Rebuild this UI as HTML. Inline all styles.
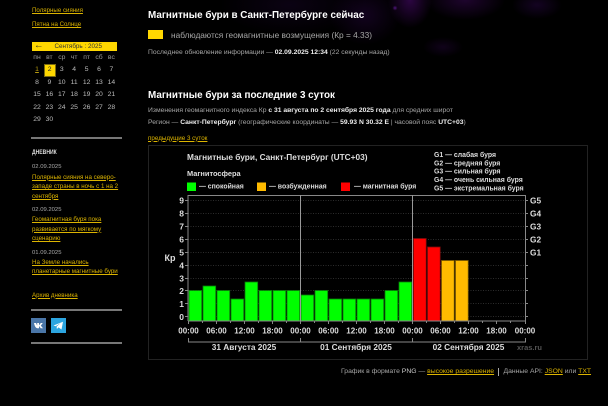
<!DOCTYPE html>
<html><head><meta charset="utf-8">
<style>
html,body{margin:0;padding:0;background:#000;width:608px;height:406px;overflow:hidden}
body{position:relative;font-family:"Liberation Sans",sans-serif;color:#a6a6a6;font-size:7px}
.a{position:absolute;white-space:nowrap}
a{color:#dcb400;text-decoration:underline}
b{color:#eee}
#bg{position:absolute;left:140px;top:0;width:468px;height:70px;
background:
radial-gradient(circle 2.5px at 255px 8px,rgba(110,30,170,.7),transparent),
radial-gradient(ellipse 22px 28px at 270px 0px,rgba(80,10,120,.55),transparent),
radial-gradient(ellipse 40px 20px at 325px 0px,rgba(60,8,90,.5),transparent),
radial-gradient(ellipse 25px 14px at 397px 5px,rgba(50,8,85,.4),transparent),
radial-gradient(ellipse 20px 10px at 303px 47px,rgba(40,5,65,.4),transparent),
radial-gradient(ellipse 35px 30px at 225px 15px,rgba(45,6,75,.4),transparent),
radial-gradient(ellipse 70px 30px at 150px 5px,rgba(22,4,38,.5),transparent)}
.hr{position:absolute;left:31px;width:91px;height:2px;background:#777}
.cal{position:absolute;left:31px;top:58px;width:91px}
.cal .t{position:absolute;font-size:6.8px;color:#bbb;width:12px;text-align:center}
.side{position:absolute;left:32px;font-size:6.2px;line-height:9.5px;white-space:nowrap}
.d{color:#aaa;font-size:5.9px}
h2{position:absolute;margin:0;font-size:9.87px;color:#fff;font-weight:bold;white-space:nowrap}
svg text{font-family:"Liberation Sans",sans-serif;font-weight:bold;fill:#ddd}
</style></head><body>
<div id="bg"></div>

<a class="a" style="left:32px;top:7px;font-size:6.15px">Полярные сияния</a>
<a class="a" style="left:32px;top:21px;font-size:6.15px">Пятна на Солнце</a>

<div class="a" style="left:32px;top:42px;width:85px;height:9px;background:#ffd700"></div>
<div class="a" style="left:34px;top:41px;font-size:9.500px;line-height:10px;color:#222">←</div>
<div class="a" style="left:54.500px;top:41.500px;font-size:6.300px;line-height:10px;color:#333">Сентябрь : 2025</div>

<div class="cal" id="c">
<span class="t" style="left:0;top:-4.500px;color:#999">пн</span><span class="t" style="left:12.400px;top:-4.500px;color:#999">вт</span><span class="t" style="left:24.800px;top:-4.500px;color:#999">ср</span><span class="t" style="left:37.200px;top:-4.500px;color:#999">чт</span><span class="t" style="left:49.600px;top:-4.500px;color:#999">пт</span><span class="t" style="left:62px;top:-4.500px;color:#999">сб</span><span class="t" style="left:74.400px;top:-4.500px;color:#999">вс</span>
<a class="t" style="left:0;top:8px;color:#b59a10">1</a>
<span class="a" style="left:12.700px;top:5.700px;width:12px;height:13.300px;background:#ffd700;outline:1px solid #7a6a10;outline-offset:-1px"></span>
<span class="t" style="left:12.700px;top:8px;color:#222">2</span><span class="t" style="left:24.800px;top:8px">3</span><span class="t" style="left:37.200px;top:8px">4</span><span class="t" style="left:49.600px;top:8px">5</span><span class="t" style="left:62px;top:8px">6</span><span class="t" style="left:74.400px;top:8px">7</span>
<span class="t" style="left:0;top:20.500px">8</span><span class="t" style="left:12.400px;top:20.500px">9</span><span class="t" style="left:24.800px;top:20.500px">10</span><span class="t" style="left:37.200px;top:20.500px">11</span><span class="t" style="left:49.600px;top:20.500px">12</span><span class="t" style="left:62px;top:20.500px">13</span><span class="t" style="left:74.400px;top:20.500px">14</span>
<span class="t" style="left:0;top:33px">15</span><span class="t" style="left:12.400px;top:33px">16</span><span class="t" style="left:24.800px;top:33px">17</span><span class="t" style="left:37.200px;top:33px">18</span><span class="t" style="left:49.600px;top:33px">19</span><span class="t" style="left:62px;top:33px">20</span><span class="t" style="left:74.400px;top:33px">21</span>
<span class="t" style="left:0;top:45.500px">22</span><span class="t" style="left:12.400px;top:45.500px">23</span><span class="t" style="left:24.800px;top:45.500px">24</span><span class="t" style="left:37.200px;top:45.500px">25</span><span class="t" style="left:49.600px;top:45.500px">26</span><span class="t" style="left:62px;top:45.500px">27</span><span class="t" style="left:74.400px;top:45.500px">28</span>
<span class="t" style="left:0;top:58px">29</span><span class="t" style="left:12.400px;top:58px">30</span>
</div>

<div class="hr" style="top:137px"></div>
<div class="a" style="left:32px;top:149px;font-size:6.500px;font-weight:bold;color:#ddd;transform:scaleX(.78);transform-origin:left top">ДНЕВНИК</div>
<div class="a d" style="left:32px;top:164px">02.09.2025</div>
<div class="side" style="top:172.500px"><a>Полярные сияния на северо-<br>западе страны в ночь с 1 на 2<br>сентября</a></div>
<div class="a d" style="left:32px;top:207px">02.09.2025</div>
<div class="side" style="top:215px"><a>Геомагнитная буря пока<br>развивается по мягкому<br>сценарию</a></div>
<div class="a d" style="left:32px;top:249.500px">01.09.2025</div>
<div class="side" style="top:257.500px"><a>На Земле начались<br>планетарные магнитные бури</a></div>
<a class="a" style="left:32px;top:291.500px;font-size:6.150px">Архив дневника</a>
<div class="hr" style="top:309px"></div>
<svg class="a" style="left:31px;top:318px" width="36" height="15" viewBox="0 0 36 15">
<rect width="15" height="15" fill="#4a76a8"/>
<path d="M3 5h2l1.200 2.600V5H8v2.400L9.800 5h2l-2 2.600L12 10.200H9.800L8 8v2.200H6.200C4.500 10 3.500 7.500 3 5z" fill="#fff"/>
<rect x="20" width="15" height="15" fill="#2ca5e0"/>
<path d="M22.500 7.500l9.500-3.800-1.500 7.800-3-2.100-1.600 1.600-.3-2.400 4-3.500-5 3.100z" fill="#fff"/>
</svg>
<div class="hr" style="top:342px"></div>

<h2 style="left:148px;top:10px">Магнитные бури в Санкт-Петербурге сейчас</h2>
<div class="a" style="left:148px;top:30px;width:15px;height:9px;background:#ffd700"></div>
<div class="a" style="left:171px;top:30px;font-size:8.300px">наблюдаются геомагнитные возмущения (Кр = 4.33)</div>
<div class="a" style="left:148px;top:49px;font-size:6.750px">Последнее обновление информации — <b>02.09.2025 12:34</b> (22 секунды назад)</div>

<h2 style="left:148px;top:90px">Магнитные бури за последние 3 суток</h2>
<div class="a" style="left:148px;top:107px;font-size:6.750px">Изменения геомагнитного индекса Кр <b>с 31 августа по 2 сентября 2025 года</b> для средних широт</div>
<div class="a" style="left:148px;top:118.500px;font-size:6.750px">Регион — <b>Санкт-Петербург</b> (географические координаты — <b>59.93 N 30.32 E</b> | часовой пояс <b>UTC+03</b>)</div>
<a class="a" style="left:148px;top:134.500px;font-size:6.250px">предыдущие 3 суток</a>

<svg class="a" style="left:0;top:0" width="608" height="406" viewBox="0 0 608 406">
<rect x="148.500" y="145.500" width="439" height="214" fill="#000" stroke="#222"/>
<text x="187" y="160" font-size="8.300">Магнитные бури, Санкт-Петербург (UTC+03)</text>
<text x="187" y="176" font-size="7.400">Магнитосфера</text>
<rect x="187" y="182.500" width="9" height="8.500" fill="#0f0"/>
<text x="199" y="188.500" font-size="6.900">— спокойная</text>
<rect x="257" y="182.500" width="9" height="8.500" fill="#fb0"/>
<text x="269" y="188.500" font-size="6.900">— возбужденная</text>
<rect x="341" y="182.500" width="9" height="8.500" fill="#f00"/>
<text x="354" y="188.500" font-size="6.900">— магнитная буря</text>
<g font-size="6.900">
<text x="434" y="157">G1 — слабая буря</text>
<text x="434" y="165.300">G2 — средняя буря</text>
<text x="434" y="173.600">G3 — сильная буря</text>
<text x="434" y="182">G4 — очень сильная буря</text>
<text x="434" y="190.300">G5 — экстремальная буря</text>
</g>
<g stroke="#2c2c2c" stroke-width="1" stroke-dasharray="1 1.500">
<path d="M188 200.500H525M188 213.500H525M188 226.500H525M188 239.500H525M188 252.500H525M188 265.500H525M188 278.500H525M188 290.500H525M188 303.500H525M188 316.500H525"/>
</g>
<g fill="#0f0" stroke="#0a7a0a" stroke-width=".8">
<rect x="189" y="290.500" width="12.700" height="30.500"/>
<rect x="203" y="286" width="12.700" height="35"/>
<rect x="217" y="290.500" width="12.700" height="30.500"/>
<rect x="231" y="299" width="12.700" height="22"/>
<rect x="245" y="282" width="12.700" height="39"/>
<rect x="259" y="290.500" width="12.700" height="30.500"/>
<rect x="273" y="290.500" width="12.700" height="30.500"/>
<rect x="287" y="290.500" width="12.700" height="30.500"/>
<rect x="301" y="295" width="12.700" height="26"/>
<rect x="315" y="290.500" width="12.700" height="30.500"/>
<rect x="329" y="299" width="12.700" height="22"/>
<rect x="343" y="299" width="12.700" height="22"/>
<rect x="357" y="299" width="12.700" height="22"/>
<rect x="371" y="299" width="12.700" height="22"/>
<rect x="385" y="290.500" width="12.700" height="30.500"/>
<rect x="399" y="282" width="12.700" height="39"/>
</g>
<g fill="#f00" stroke="#7a0a0a" stroke-width=".8">
<rect x="413.500" y="238.500" width="12.700" height="82.500"/>
<rect x="427.500" y="247" width="12.700" height="74"/>
</g>
<g fill="#fb0" stroke="#7a5a00" stroke-width=".8">
<rect x="441.500" y="260.500" width="12.700" height="60.500"/>
<rect x="455.500" y="260.500" width="12.700" height="60.500"/>
</g>
<path d="M188 321V195.500H525.500V321H188" fill="none" stroke="#888"/>
<path d="M300.500 195V321M412.500 195V321" stroke="#999"/>
<g stroke="#888">
<path d="M185 200.500h3M185 213.500h3M185 226.500h3M185 239.500h3M185 252.500h3M185 265.500h3M185 278.500h3M185 290.500h3M185 303.500h3M185 316.500h3"/>
<path d="M525 200.500h3M525 213.500h3M525 226.500h3M525 239.500h3M525 252.500h3M525 265.500h3M525 278.500h3M525 290.500h3M525 303.500h3M525 316.500h3"/>
<path d="M188.500 321v3M202.500 321v2M216.500 321v3M230.500 321v2M244.500 321v3M258.500 321v2M272.500 321v3M286.500 321v2M300.500 321v3M314.500 321v2M328.500 321v3M342.500 321v2M356.500 321v3M370.500 321v2M384.500 321v3M398.500 321v2M412.500 321v3M426.500 321v2M440.500 321v3M454.500 321v2M468.500 321v3M482.500 321v2M496.500 321v3M510.500 321v2M525.500 321v3"/>
<path d="M188.500 338v4H525.500V338M300.500 338v4M412.500 338v4" fill="none"/>
</g>
<g font-size="8.500" text-anchor="end">
<text x="184" y="203.500">9</text><text x="184" y="216.500">8</text><text x="184" y="229.500">7</text><text x="184" y="242.500">6</text><text x="184" y="255.500">5</text><text x="184" y="268.500">4</text><text x="184" y="281.500">3</text><text x="184" y="294">2</text><text x="184" y="307">1</text><text x="184" y="320">0</text>
</g>
<g font-size="8.300">
<text x="530" y="203.500">G5</text><text x="530" y="216.500">G4</text><text x="530" y="229.500">G3</text><text x="530" y="242.500">G2</text><text x="530" y="255.500">G1</text>
</g>
<text x="164.500" y="261" font-size="9">Кр</text>
<g font-size="8" text-anchor="middle">
<text x="188.500" y="333.500">00:00</text><text x="216.500" y="333.500">06:00</text><text x="244.500" y="333.500">12:00</text><text x="272.500" y="333.500">18:00</text><text x="300.500" y="333.500">00:00</text><text x="328.500" y="333.500">06:00</text><text x="356.500" y="333.500">12:00</text><text x="384.500" y="333.500">18:00</text><text x="412.500" y="333.500">00:00</text><text x="440.500" y="333.500">06:00</text><text x="468.500" y="333.500">12:00</text><text x="496.500" y="333.500">18:00</text><text x="525" y="333.500">00:00</text>
</g>
<g font-size="8.300" text-anchor="middle">
<text x="244" y="350">31 Августа 2025</text><text x="356" y="350">01 Сентября 2025</text><text x="468.500" y="350">02 Сентября 2025</text>
</g>
<text x="517" y="350" font-size="7.500" style="fill:#555">xras.ru</text>
</svg>

<div class="a" style="left:341px;top:368px;font-size:6.800px">График в формате <span style="color:#ccc">PNG</span> — <a>высокое разрешение</a></div>
<div class="a" style="left:498px;top:368px;width:1px;height:8px;background:#aaa"></div>
<div class="a" style="left:503.500px;top:368px;font-size:6.800px">Данные API: <a>JSON</a> или <a>TXT</a></div>
</body></html>
